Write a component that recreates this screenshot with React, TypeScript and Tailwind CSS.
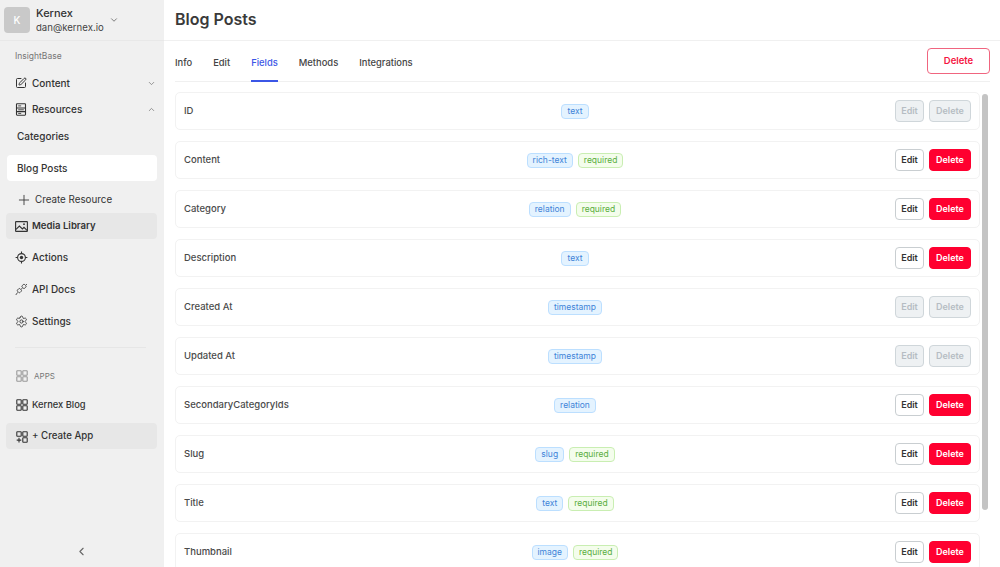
import { ChevronDown, ChevronUp, ChevronLeft, Plus, SquarePen, Settings } from 'lucide-react';

type Field = { name: string; chips: string[]; locked?: boolean };

const fields: Field[] = [
  { name: 'ID', chips: ['text'], locked: true },
  { name: 'Content', chips: ['rich-text', 'required'] },
  { name: 'Category', chips: ['relation', 'required'] },
  { name: 'Description', chips: ['text'] },
  { name: 'Created At', chips: ['timestamp'], locked: true },
  { name: 'Updated At', chips: ['timestamp'], locked: true },
  { name: 'SecondaryCategoryIds', chips: ['relation'] },
  { name: 'Slug', chips: ['slug', 'required'] },
  { name: 'Title', chips: ['text', 'required'] },
  { name: 'Thumbnail', chips: ['image', 'required'] },
];

function ResourcesIcon() {
  return (
    <svg width="12" height="13" viewBox="0 0 12 13" fill="none" stroke="#333" strokeWidth="1.1">
      <rect x="1.5" y="0.8" width="9" height="11.4" rx="0.6" />
      <path d="M1.5 5h9M1.5 8.6h9" />
      <path d="M3.2 2.9h3M3.2 6.8h5.6M3.2 10.4h3" strokeWidth="0.9" />
    </svg>
  );
}

function MediaIcon() {
  return (
    <svg width="13" height="11" viewBox="0 0 13 11" fill="none" stroke="#333" strokeWidth="1.1">
      <rect x="0.6" y="0.6" width="11.8" height="9.8" rx="0.5" />
      <path d="M1 8.4 4.4 5l3 3 1.6-1.6 3 3" />
      <circle cx="9" cy="3.2" r="0.9" fill="#333" stroke="none" />
    </svg>
  );
}

function ActionsIcon() {
  return (
    <svg width="13" height="13" viewBox="0 0 13 13" fill="none" stroke="#333" strokeWidth="1.1">
      <circle cx="6.5" cy="6.5" r="3.9" />
      <circle cx="6.5" cy="6.5" r="1.7" fill="#333" stroke="none" />
      <path d="M6.5 .6v2M6.5 10.4v2M.6 6.5h2M10.4 6.5h2" />
    </svg>
  );
}

function ApiIcon() {
  return (
    <svg width="13" height="13" viewBox="0 0 13 13" fill="none" stroke="#444" strokeWidth="0.9">
      <rect x="2.6" y="5.8" width="3.6" height="3.6" rx="1.1" transform="rotate(-45 4.4 7.6)" />
      <rect x="7.2" y="1.6" width="3.6" height="3.6" rx="1.1" transform="rotate(-45 9 3.4)" />
      <path d="M6 6.4 7.4 5M2.6 9.4 .8 12M11 2l1-1" />
    </svg>
  );
}

function GridIcon({ color = '#333' }: { color?: string }) {
  return (
    <svg width="12" height="12" viewBox="0 0 12 12" fill="none" stroke={color} strokeWidth="1.1">
      <rect x="0.8" y="0.8" width="4.4" height="4.4" rx="0.5" />
      <rect x="6.8" y="0.8" width="4.4" height="4.4" rx="0.5" />
      <rect x="0.8" y="6.8" width="4.4" height="4.4" rx="0.5" />
      <rect x="6.8" y="6.8" width="4.4" height="4.4" rx="0.5" />
    </svg>
  );
}

function GridPlusIcon() {
  return (
    <svg width="12" height="12" viewBox="0 0 12 12" fill="none" stroke="#333" strokeWidth="1.1">
      <rect x="0.8" y="0.8" width="4.4" height="4.4" rx="0.5" />
      <rect x="6.8" y="0.8" width="4.4" height="4.4" rx="0.5" />
      <path d="M3 6.8v4.6M.7 9.1h4.6" />
      <rect x="6.8" y="6.8" width="4.4" height="4.4" rx="0.5" />
    </svg>
  );
}

function Chip({ label }: { label: string }) {
  const green = label === 'required';
  return (
    <span
      className={`h-[15px] px-[5px] flex items-center rounded-[4px] border text-[8.5px] leading-none ${
        green
          ? 'bg-[#f4fdec] border-[#c9eeb2] text-[#5aae3e]'
          : 'bg-[#e4f3ff] border-[#bcdfff] text-[#3f84d8]'
      }`}
    >
      {label}
    </span>
  );
}

function FieldRow({ field }: { field: Field }) {
  return (
    <div className="shrink-0 h-[38px] pl-[8px] pr-[8px] grid grid-cols-3 items-center bg-white border border-[#f2f2f2] rounded-[5px]">
      <div className="pt-px text-[9.5px] font-medium text-[#4a4a4a]">{field.name}</div>
      <div className="flex justify-center gap-[5px] pr-[5px]">
        {field.chips.map((c) => (
          <Chip key={c} label={c} />
        ))}
      </div>
      <div className="flex justify-end gap-[5px]">
        <button
          className={`w-[29px] h-[22px] rounded-[4px] border text-[9px] font-semibold ${
            field.locked
              ? 'bg-[#eef1f3] border-[#cfd6da] text-[#b6bdc3]'
              : 'bg-white border-[#c9ced1] text-[#333]'
          }`}
        >
          Edit
        </button>
        <button
          className={`w-[42px] h-[22px] rounded-[4px] border text-[9px] font-semibold ${
            field.locked
              ? 'bg-[#eef1f3] border-[#cfd6da] text-[#b6bdc3]'
              : 'bg-[#ff0030] border-[#ff0030] text-white'
          }`}
        >
          Delete
        </button>
      </div>
    </div>
  );
}

export default function App() {
  return (
    <div className="w-[1000px] h-[567px] flex overflow-hidden bg-white font-['Inter',sans-serif] text-[#333]">
      <aside className="w-[164px] shrink-0 h-full bg-[#f0f0f0] flex flex-col text-[10px] font-medium">
        <div className="h-[41px] shrink-0 pl-[4px] pt-[7px] flex items-start gap-[6px] border-b border-[#e8e8e8]">
          <div className="w-[26px] h-[26px] rounded-[4px] bg-[#c9c9c9] text-white text-[10px] flex items-center justify-center">
            K
          </div>
          <div className="-mt-[1px] w-[67px]">
            <div className="text-[11px] leading-[14px] text-[#333]">Kernex</div>
            <div className="text-[9.6px] leading-[15px] font-normal text-[#444]">dan@kernex.io</div>
          </div>
          <ChevronDown size={10} className="mt-[8px] text-[#666]" />
        </div>

        <div className="mt-[10px] pl-[15px] text-[8.5px] leading-[10px] font-normal text-[#777]">InsightBase</div>

        <div className="mt-[15px] h-[14px] pl-[15px] pr-[8px] flex items-center gap-[5px]">
          <SquarePen size={12} className="text-[#333]" />
          <span className="flex-1">Content</span>
          <ChevronDown size={9} className="text-[#777]" />
        </div>
        <div className="mt-[12px] h-[14px] pl-[15px] pr-[8px] flex items-center gap-[5px]">
          <ResourcesIcon />
          <span className="flex-1">Resources</span>
          <ChevronUp size={9} className="text-[#777]" />
        </div>
        <div className="mt-[13px] h-[14px] pl-[17px] flex items-center">Categories</div>
        <div className="mt-[12px] mx-[7px] h-[26px] pl-[10px] flex items-center bg-white rounded-[4px]">Blog Posts</div>
        <div className="mt-[12px] h-[14px] pl-[16px] flex items-center gap-[3px] font-normal text-[9.8px]">
          <Plus size={16} className="text-[#333]" strokeWidth={1.3} />
          Create Resource
        </div>
        <div className="mt-[6px] ml-[6px] mr-[7px] h-[26px] pl-[9px] pt-px flex items-center gap-[4px] bg-[#e7e7e7] rounded-[4px] font-semibold text-[9.6px]">
          <MediaIcon />
          Media Library
        </div>
        <div className="mt-[11px] h-[14px] pl-[15px] flex items-center gap-[4px]">
          <ActionsIcon />
          Actions
        </div>
        <div className="mt-[18px] h-[14px] pl-[15px] flex items-center gap-[4px]">
          <ApiIcon />
          API Docs
        </div>
        <div className="mt-[18px] h-[14px] pl-[15px] flex items-center gap-[4px]">
          <Settings size={13} className="text-[#333]" strokeWidth={1.6} />
          Settings
        </div>
        <div className="mt-[19px] ml-[15px] mr-[18px] h-px bg-[#e6e6e6]" />
        <div className="mt-[21px] h-[14px] pl-[16px] flex items-center gap-[6px] text-[8px] font-normal text-[#777]">
          <GridIcon color="#999" />
          APPS
        </div>
        <div className="mt-[14px] h-[14px] pt-px pl-[16px] flex items-center gap-[4px] text-[9.3px]">
          <GridIcon />
          Kernex Blog
        </div>
        <div className="mt-[12px] ml-[6px] mr-[7px] h-[26px] pl-[10px] pt-px flex items-center gap-[4px] bg-[#e7e7e7] rounded-[4px] text-[9.7px]">
          <GridPlusIcon />
          + Create App
        </div>
        <div className="mt-auto mb-[9px] flex justify-center">
          <ChevronLeft size={13} className="text-[#666] -ml-[2px]" />
        </div>
      </aside>

      <main className="flex-1 min-w-0 flex flex-col">
        <div className="h-[41px] shrink-0 pl-[11px] pb-[2px] flex items-center border-b border-[#f0f0f0]">
          <h1 className="text-[16px] font-semibold text-[#3a3a3a]">Blog Posts</h1>
        </div>
        <div className="h-[41px] shrink-0 ml-[11px] mr-[10px] flex items-center justify-between border-b border-[#f0f0f0]">
          <div className="flex h-full gap-[21px] text-[9.4px] text-[#444] font-medium">
            <div className="flex items-center pt-[4px]">Info</div>
            <div className="flex items-center pt-[4px]">Edit</div>
            <div className="flex items-center text-[#3b56e6] border-b-2 border-[#3b56e6] pt-[6px] -mb-px">Fields</div>
            <div className="flex items-center pt-[4px]">Methods</div>
            <div className="flex items-center pt-[4px]">Integrations</div>
          </div>
          <button className="w-[63px] h-[26px] rounded-[4px] bg-white border border-[#f0657f] text-[#f5153f] text-[9.5px] font-semibold">
            Delete
          </button>
        </div>
        <div className="flex-1 min-h-0 flex pl-[11px] pt-[10px] overflow-hidden">
          <div className="w-[805px] shrink-0 flex flex-col gap-[11px]">
            {fields.map((f) => (
              <FieldRow key={f.name} field={f} />
            ))}
          </div>
          <div className="ml-[2px] w-[6px] h-[416px] mt-[2px] rounded-[3px] bg-[#c4c4c4]" />
        </div>
      </main>
    </div>
  );
}
